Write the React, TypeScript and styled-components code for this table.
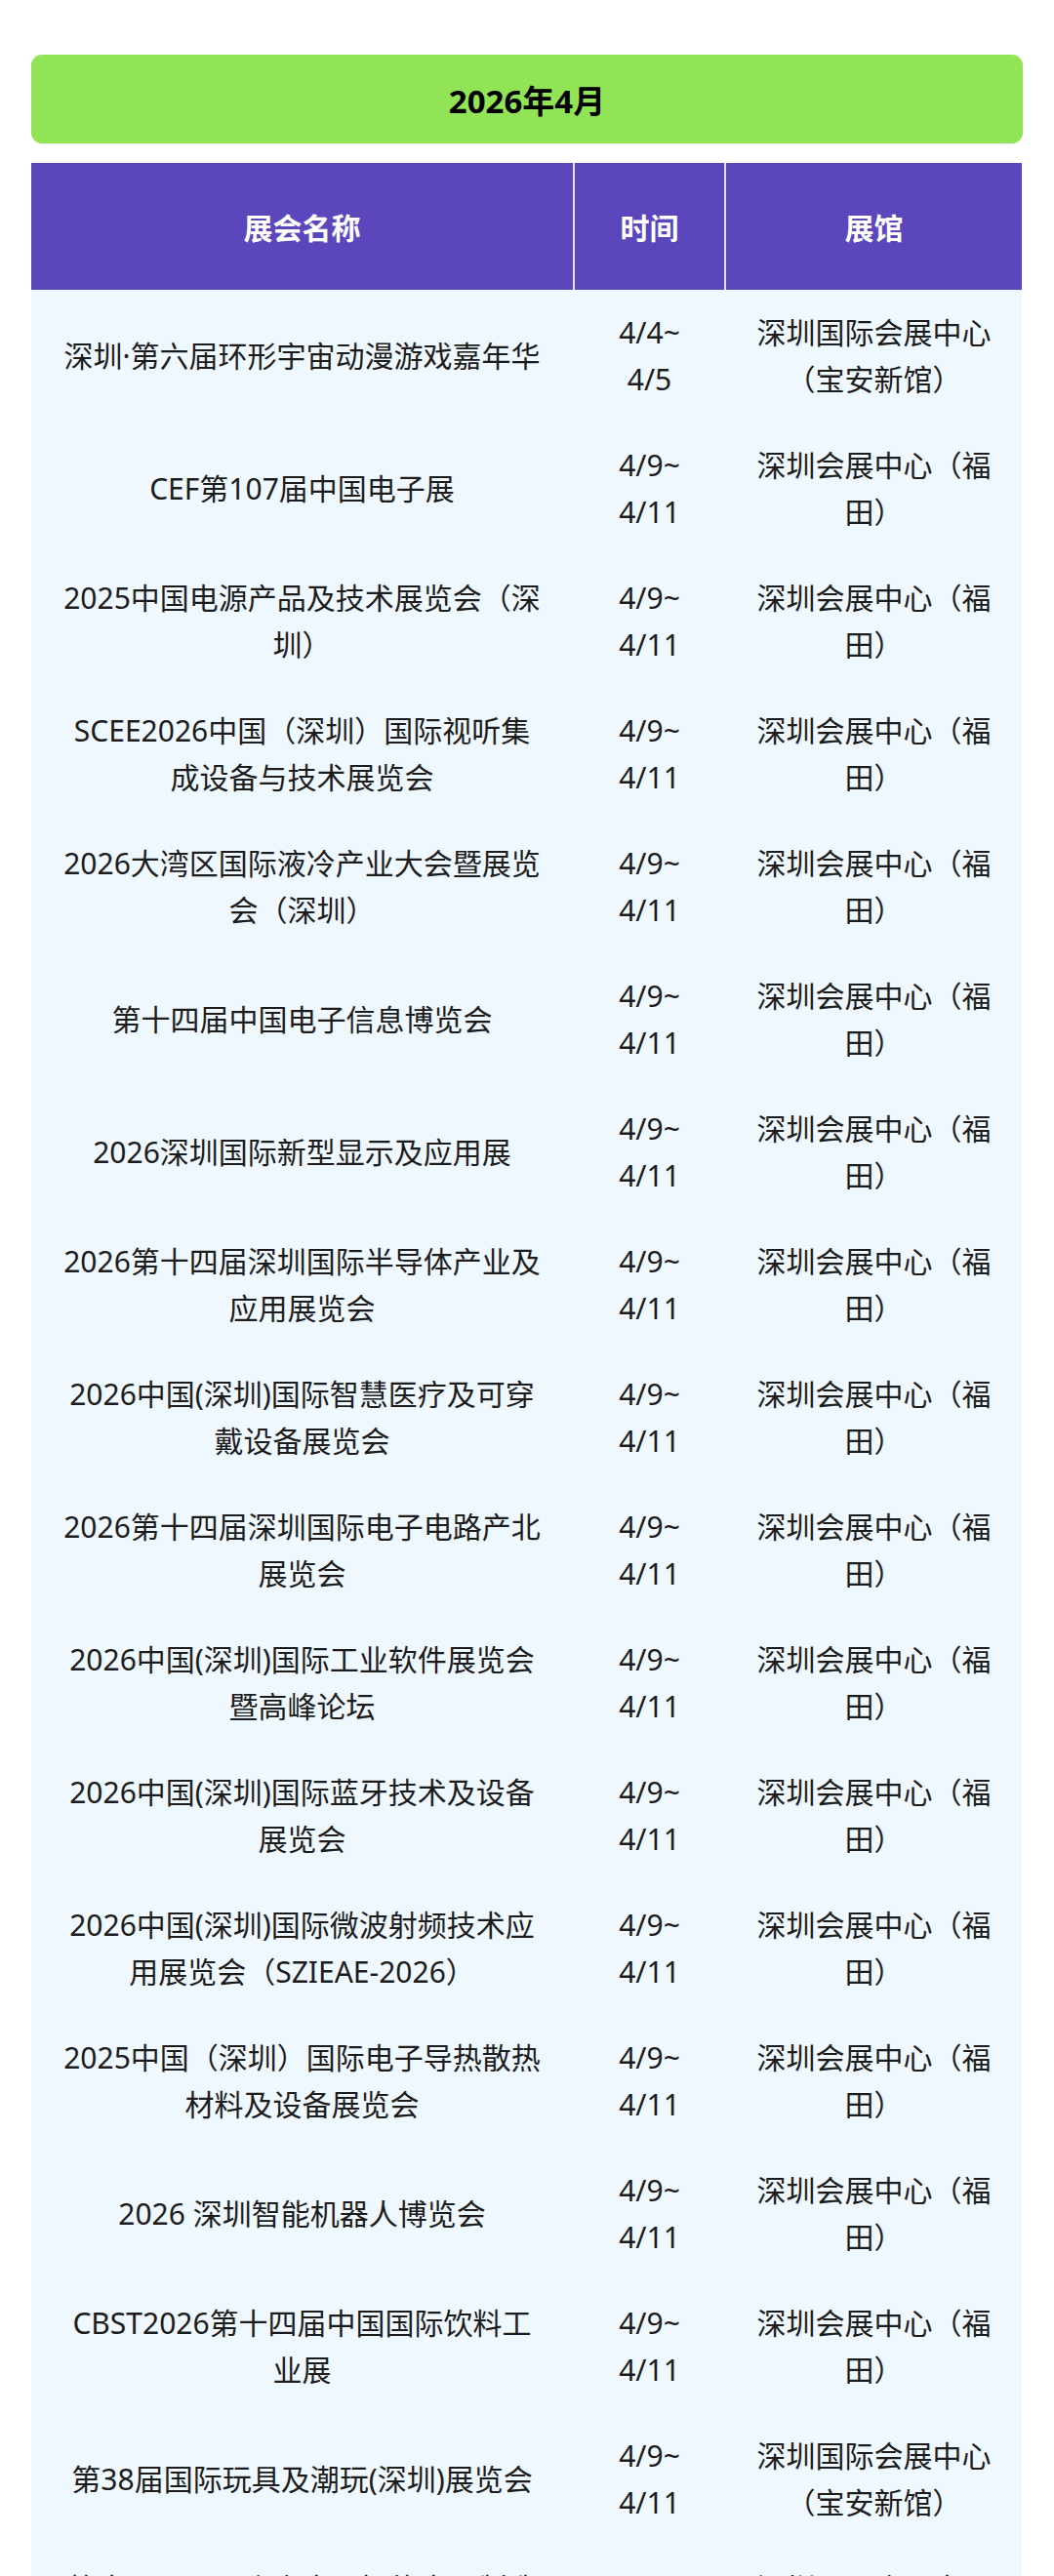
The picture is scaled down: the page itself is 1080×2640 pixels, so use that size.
import styled, { createGlobalStyle } from "styled-components";

const GlobalStyle = createGlobalStyle`
  * {
    box-sizing: border-box;
  }
  body {
    margin: 0;
    background: #ffffff;
    font-family: "Noto Sans", "Noto Sans CJK SC", sans-serif;
    color: #1c1c1c;
  }
`;

interface Expo {
  name: string;
  start: string;
  end: string;
  venue: string;
}

const FUTIAN = "深圳会展中心（福田）";
const BAOAN = "深圳国际会展中心（宝安新馆）";

const expos: Expo[] = [
  { name: "深圳·第六届环形宇宙动漫游戏嘉年华", start: "4/4~", end: "4/5", venue: BAOAN },
  { name: "CEF第107届中国电子展", start: "4/9~", end: "4/11", venue: FUTIAN },
  { name: "2025中国电源产品及技术展览会（深圳）", start: "4/9~", end: "4/11", venue: FUTIAN },
  { name: "SCEE2026中国（深圳）国际视听集成设备与技术展览会", start: "4/9~", end: "4/11", venue: FUTIAN },
  { name: "2026大湾区国际液冷产业大会暨展览会（深圳）", start: "4/9~", end: "4/11", venue: FUTIAN },
  { name: "第十四届中国电子信息博览会", start: "4/9~", end: "4/11", venue: FUTIAN },
  { name: "2026深圳国际新型显示及应用展", start: "4/9~", end: "4/11", venue: FUTIAN },
  { name: "2026第十四届深圳国际半导体产业及应用展览会", start: "4/9~", end: "4/11", venue: FUTIAN },
  { name: "2026中国(深圳)国际智慧医疗及可穿戴设备展览会", start: "4/9~", end: "4/11", venue: FUTIAN },
  { name: "2026第十四届深圳国际电子电路产北展览会", start: "4/9~", end: "4/11", venue: FUTIAN },
  { name: "2026中国(深圳)国际工业软件展览会暨高峰论坛", start: "4/9~", end: "4/11", venue: FUTIAN },
  { name: "2026中国(深圳)国际蓝牙技术及设备展览会", start: "4/9~", end: "4/11", venue: FUTIAN },
  { name: "2026中国(深圳)国际微波射频技术应用展览会（SZIEAE-2026）", start: "4/9~", end: "4/11", venue: FUTIAN },
  { name: "2025中国（深圳）国际电子导热散热材料及设备展览会", start: "4/9~", end: "4/11", venue: FUTIAN },
  { name: "2026 深圳智能机器人博览会", start: "4/9~", end: "4/11", venue: FUTIAN },
  { name: "CBST2026第十四届中国国际饮料工业展", start: "4/9~", end: "4/11", venue: FUTIAN },
  { name: "第38届国际玩具及潮玩(深圳)展览会", start: "4/9~", end: "4/11", venue: BAOAN },
  { name: "第十一届国际小家电暨智能电器制造展览会（深圳）", start: "4/10~", end: "4/12", venue: BAOAN },
];

type Col = "name" | "date" | "venue";

const cellPadding: Record<Col, string> = {
  name: "0 31px",
  date: "0 8px",
  venue: "0 26px",
};

export default function App() {
  return (
    <Page>
      <GlobalStyle />
      <MonthBar>2026年4月</MonthBar>
      <Table>
        <colgroup>
          <col style={{ width: 555 }} />
          <col style={{ width: 155 }} />
          <col style={{ width: 305 }} />
        </colgroup>
        <thead>
          <tr>
            <HeadCell>展会名称</HeadCell>
            <HeadCell $divider>时间</HeadCell>
            <HeadCell $divider>展馆</HeadCell>
          </tr>
        </thead>
        <tbody>
          {expos.map((expo, i) => (
            <Row key={i}>
              <Cell $col="name">{expo.name}</Cell>
              <Cell $col="date">
                <DateLine>{expo.start}</DateLine>
                <DateLine>{expo.end}</DateLine>
              </Cell>
              <Cell $col="venue">{expo.venue}</Cell>
            </Row>
          ))}
        </tbody>
      </Table>
    </Page>
  );
}

const Page = styled.div`
  padding: 56px 32px 0;
  width: 1080px;
`;

const MonthBar = styled.div`
  display: flex;
  align-items: center;
  justify-content: center;
  width: 1016px;
  height: 91px;
  margin-bottom: 20px;
  background: #92e457;
  border-radius: 11px;
  color: #000;
  font-size: 33px;
  font-weight: 700;
`;

const Table = styled.table`
  width: 1015px;
  table-layout: fixed;
  border-collapse: separate;
  border-spacing: 0;
  background: #eff7ff;
`;

const HeadCell = styled.th<{ $divider?: boolean }>`
  height: 130px;
  padding: 0 8px;
  background: #5b46bc;
  color: #ffffff;
  font-size: 30px;
  font-weight: 700;
  text-align: center;
  vertical-align: middle;
  border-left: ${({ $divider }) => ($divider ? "2px solid #e4e0f4" : "none")};
`;

const Row = styled.tr`
  background: #eff7ff;
`;

const Cell = styled.td<{ $col: Col }>`
  padding: ${({ $col }) => cellPadding[$col]};
  padding-top: 20px;
  padding-bottom: 20px;
  font-size: 30px;
  line-height: 48px;
  text-align: center;
  vertical-align: middle;
  color: #1c1c1c;
  border-left: ${({ $col }) => ($col === "name" ? "none" : "2px solid transparent")};
`;

const DateLine = styled.span`
  display: block;
  white-space: nowrap;
`;
